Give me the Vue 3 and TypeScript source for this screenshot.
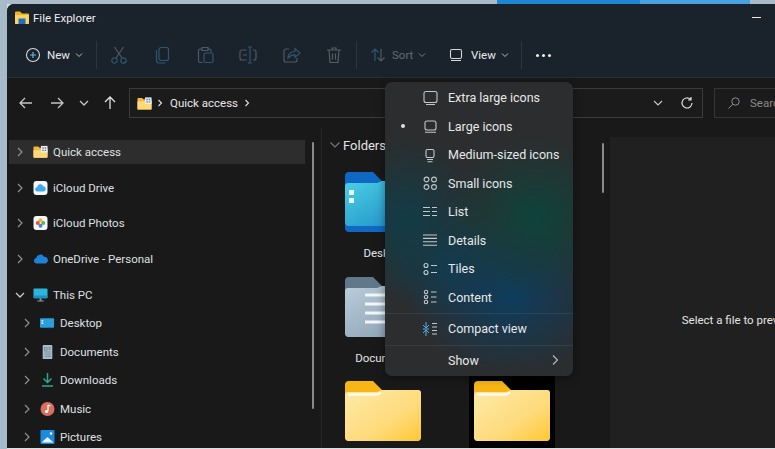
<script setup lang="ts">
type Part = { d: string; c?: string }
interface MenuItem { label: string; parts: Part[]; dot?: boolean }

const lines = (ys: number[], x1: number, x2: number) => ys.map((y) => `M${x1} ${y}H${x2}`).join('')
const circle = (x: number, y: number, r: number) => `M${x - r} ${y}a${r} ${r} 0 1 0 ${2 * r} 0a${r} ${r} 0 1 0 ${-2 * r} 0`

const viewItems: MenuItem[] = [
  { label: 'Extra large icons', parts: [{ d: 'M6 3.5h9a2 2 0 0 1 2 2v7a2 2 0 0 1-2 2H6a2 2 0 0 1-2-2v-7a2 2 0 0 1 2-2zM6 16.5h9' }] },
  { label: 'Large icons', dot: true, parts: [{ d: 'M7 5h7a2 2 0 0 1 2 2v5a2 2 0 0 1-2 2H7a2 2 0 0 1-2-2V7a2 2 0 0 1 2-2zM5 16.2h11' }] },
  { label: 'Medium-sized icons', parts: [{ d: 'M7.500 4.500h5a1.500 1.500 0 0 1 1.500 1.500v5a1.500 1.500 0 0 1-1.500 1.500h-5A1.500 1.500 0 0 1 6 11V6a1.500 1.500 0 0 1 1.500-1.500zM7 14.500h6M7.500 16.700h5' }] },
  { label: 'Small icons', parts: [{ d: circle(6.5, 6.5, 2.4) + circle(14, 6.5, 2.4) + circle(6.5, 14, 2.4) + circle(14, 14, 2.4) }] },
  { label: 'List', parts: [{ d: lines([5.5, 9.5, 13.5], 3, 10) + lines([5.5, 9.5, 13.5], 12, 17) }] },
  { label: 'Details', parts: [{ d: lines([5, 8.4, 11.8, 15.2], 3, 17) }] },
  { label: 'Tiles', parts: [{ d: circle(6, 6.5, 2) + circle(6, 13.5, 2) + lines([6.5, 13.5], 11, 17) }] },
  { label: 'Content', parts: [{ d: circle(6, 5, 1.7) + circle(6, 10, 1.7) + circle(6, 15, 1.7) + lines([5, 10, 15], 11, 16.5) }] }
]

const compactParts: Part[] = [
  { d: 'M6 3v6M3 6l3 3 3-3M6 17v-6M3 14l3-3 3 3M3 10h6', c: '#4fb3e8' },
  { d: lines([4.5, 8, 11.5, 15], 12, 17) }
]

const blue = '#2e566f'
const dim = '#4c5a64'
const tools: { name: string; parts: Part[] }[] = [
  { name: 'Cut', parts: [{ d: 'M5.5 2l7.5 11M14.5 2L7 13', c: dim }, { d: circle(5.5, 15.5, 2.7) + circle(14.5, 15.5, 2.7), c: blue }] },
  { name: 'Copy', parts: [{ d: 'M9 2.5h5.5a2 2 0 0 1 2 2v9a2 2 0 0 1-2 2H9a2 2 0 0 1-2-2v-9a2 2 0 0 1 2-2zM4.5 5v10a3 3 0 0 0 3 3h6', c: blue }] },
  { name: 'Paste', parts: [{ d: 'M7 4H5a1.5 1.5 0 0 0-1.5 1.5V16A1.5 1.5 0 0 0 5 17.5h2.5M13 4h1.500A1.500 1.500 0 0 1 16 5.500V7M7 2.500h6V5.500H7z', c: dim }, { d: 'M10.500 8h6a1.500 1.500 0 0 1 1.500 1.500V16a1.500 1.500 0 0 1-1.500 1.500h-6A1.500 1.500 0 0 1 9 16V9.500A1.500 1.500 0 0 1 10.500 8z', c: blue }] },
  { name: 'Rename', parts: [{ d: 'M8.500 5H4a2 2 0 0 0-2 2v6a2 2 0 0 0 2 2h4.500M15 5h1a2 2 0 0 1 2 2v6a2 2 0 0 1-2 2h-1M5 10h4', c: dim }, { d: 'M12 2v16M10 2h4M10 18h4', c: blue }] },
  { name: 'Share', parts: [{ d: 'M8 4H5a2 2 0 0 0-2 2v9a2 2 0 0 0 2 2h9a2 2 0 0 0 2-2v-2', c: dim }, { d: 'M7 13c0-4 3-6.500 7-6.500V3.500L19 8l-5 4.500V9.800c-3 0-5 1-7 3.200z', c: blue }] },
  { name: 'Delete', parts: [{ d: 'M3 5h14M8 5V3h4v2M5 5l1 12.500h8L15 5M8.500 8.500v6M11.500 8.500v6', c: '#555d63' }] }
]

const roots = [
  { label: 'Quick access', icon: 'quick', active: true },
  { label: 'iCloud Drive', icon: 'drive' },
  { label: 'iCloud Photos', icon: 'photos' },
  { label: 'OneDrive - Personal', icon: 'onedrive' }
]
const children = [
  { label: 'Desktop', icon: 'desktop' },
  { label: 'Documents', icon: 'documents' },
  { label: 'Downloads', icon: 'downloads' },
  { label: 'Music', icon: 'music' },
  { label: 'Pictures', icon: 'pictures' }
]
const folders = [
  { label: 'Desktop', kind: 'blue' },
  { label: '', kind: 'yellow' },
  { label: 'Documents', kind: 'gray' },
  { label: '', kind: 'yellow' },
  { label: '', kind: 'yellow' },
  { label: '', kind: 'yellow', black: true }
]
</script>

<template>
  <div class="page">
    <div class="window">
      <header class="titlebar">
        <svg class="ico16" viewBox="0 0 16 14"><path d="M1 1.500A1 1 0 0 1 2 .5h4l2 2h6a1 1 0 0 1 1 1V12a1 1 0 0 1-1 1H2a1 1 0 0 1-1-1z" fill="#f0b429"/><path d="M1 4h14v8a1 1 0 0 1-1 1H2a1 1 0 0 1-1-1z" fill="#fcd462"/><rect x="4.500" y="7.500" width="7" height="5.500" fill="#1f6fc2"/></svg>
        <span class="title">File Explorer</span>
        <span class="minimize"></span>
      </header>

      <div class="toolbar">
        <div class="new">
          <svg class="ico16" viewBox="0 0 16 16"><circle cx="8" cy="8" r="6.500" fill="none" stroke="#d5d8da" stroke-width="1.100"/><path d="M8 5v6M5 8h6" stroke="#62b6ea" stroke-width="1.200"/></svg>
          <span>New</span>
          <svg class="chev" viewBox="0 0 8 8"><path d="M1 2.500l3 3 3-3" fill="none" stroke="#b9bcbe"/></svg>
        </div>
        <i class="tsep"></i>
        <div class="tools">
          <span v-for="t in tools" :key="t.name" class="tool" :title="t.name">
            <svg class="ico20" viewBox="0 0 20 20"><path v-for="(p, i) in t.parts" :key="i" :d="p.d" :stroke="p.c" fill="none" stroke-width="1.200"/></svg>
          </span>
        </div>
        <i class="tsep sep2"></i>
        <div class="sort">
          <svg class="ico16" viewBox="0 0 16 16"><path d="M5 14V2M1.500 5.500L5 2l3.500 3.500" fill="none" stroke="#2e566f" stroke-width="1.200"/><path d="M11 2v12M7.500 10.500L11 14l3.500-3.500" fill="none" stroke="#4c5a64" stroke-width="1.200"/></svg>
          <span>Sort</span>
          <svg class="chev" viewBox="0 0 8 8"><path d="M1 2.500l3 3 3-3" fill="none" stroke="#75808a"/></svg>
        </div>
        <div class="view">
          <svg class="ico16" viewBox="0 0 16 16"><path d="M4 2.500h8a1.500 1.500 0 0 1 1.500 1.500v6a1.500 1.500 0 0 1-1.500 1.500H4A1.500 1.500 0 0 1 2.500 10V4A1.500 1.500 0 0 1 4 2.500zM3 13.500h10" fill="none" stroke="#d5d8da" stroke-width="1.100"/></svg>
          <span>View</span>
          <svg class="chev" viewBox="0 0 8 8"><path d="M1 2.500l3 3 3-3" fill="none" stroke="#b9bcbe"/></svg>
        </div>
        <i class="tsep sep3"></i>
        <div class="dots"><i></i><i></i><i></i></div>
      </div>

      <div class="nav">
        <svg class="navi back" viewBox="0 0 16 16"><path d="M14 8H2M7 3L2 8l5 5" fill="none" stroke="#c4c4c4" stroke-width="1.300"/></svg>
        <svg class="navi fwd" viewBox="0 0 16 16"><path d="M2 8h12M9 3l5 5-5 5" fill="none" stroke="#c4c4c4" stroke-width="1.300"/></svg>
        <svg class="navi down" viewBox="0 0 16 16"><path d="M4 6l4 4 4-4" fill="none" stroke="#c4c4c4" stroke-width="1.300"/></svg>
        <svg class="navi up" viewBox="0 0 16 16"><path d="M8 14V2M3 7l5-5 5 5" fill="none" stroke="#e0e0e0" stroke-width="1.300"/></svg>
        <div class="address">
          <svg class="addr-folder" viewBox="0 0 16 13"><path d="M.5 1.500a1 1 0 0 1 1-1h4l1.500 1.500h7.500a1 1 0 0 1 1 1V12a1 1 0 0 1-1 1h-13a1 1 0 0 1-1-1z" fill="#f5b83a"/><path d="M.5 4h15v8a1 1 0 0 1-1 1h-13a1 1 0 0 1-1-1z" fill="#fdd97a"/><rect x="8.500" y="0" width="7" height="7" fill="#e8eef2"/><path d="M10 1.500h1.500V3H10zM12.500 1.500H14V3h-1.500zM10 4h1.500v1.500H10zM12.500 4H14v1.500h-1.500z" fill="#5a7ea0"/></svg>
          <svg class="crumb first" viewBox="0 0 8 8"><path d="M2.500 1l3 3-3 3" fill="none" stroke="#e0e0e0" stroke-width="1.100"/></svg>
          <span class="crumb-text">Quick access</span>
          <svg class="crumb" viewBox="0 0 8 8"><path d="M2.500 1l3 3-3 3" fill="none" stroke="#e0e0e0" stroke-width="1.100"/></svg>
          <span class="grow"></span>
          <svg class="addr-chev" viewBox="0 0 12 12"><path d="M2 4l4 4 4-4" fill="none" stroke="#c8c8c8" stroke-width="1.100"/></svg>
          <svg class="addr-refresh" viewBox="0 0 14 14"><path d="M12 7a5 5 0 1 1-1.600-3.700M11 1v3H8" fill="none" stroke="#dcdcdc" stroke-width="1.200"/></svg>
        </div>
        <div class="search">
          <svg class="search-ico" viewBox="0 0 14 14"><circle cx="8.500" cy="5.500" r="3.700" fill="none" stroke="#8d8d8d"/><path d="M5.700 8.300L1.500 12.500" stroke="#8d8d8d"/></svg>
          <span>Search</span>
        </div>
      </div>

      <div class="body">
        <aside class="sidebar">
          <div class="tree">
            <div v-for="r in roots" :key="r.label" class="row root" :class="{ active: r.active }">
              <svg class="tw" viewBox="0 0 8 10"><path d="M2 1l4 4-4 4" fill="none" stroke="#8f8f8f" stroke-width="1.200"/></svg>
              <svg v-if="r.icon === 'quick'" class="si" viewBox="0 0 16 14"><path d="M.5 2a1 1 0 0 1 1-1h4L7 2.500h7.500a1 1 0 0 1 1 1V12a1 1 0 0 1-1 1h-13a1 1 0 0 1-1-1z" fill="#f5b83a"/><path d="M.5 5h15v7a1 1 0 0 1-1 1h-13a1 1 0 0 1-1-1z" fill="#fdd97a"/><rect x="8.500" y=".5" width="7" height="7" fill="#e8eef2"/><path d="M10 2h1.500v1.500H10zM12.500 2H14v1.500h-1.500zM10 4.500h1.500V6H10zM12.500 4.500H14V6h-1.500z" fill="#5a7ea0"/></svg>
              <svg v-else-if="r.icon === 'drive'" class="si" viewBox="0 0 14 14"><rect width="14" height="14" rx="3" fill="#f4f6f8"/><path d="M4 10.500a2.200 2.200 0 0 1-.3-4.400A3.200 3.200 0 0 1 9.800 5.200 2.700 2.700 0 0 1 10.300 10.500z" fill="#3ea8ea"/></svg>
              <svg v-else-if="r.icon === 'photos'" class="si" viewBox="0 0 14 14"><rect width="14" height="14" rx="3" fill="#f4f6f8"/><circle cx="7" cy="4.300" r="2" fill="#f5b62c"/><circle cx="9.700" cy="7" r="2" fill="#56b45a"/><circle cx="7" cy="9.700" r="2" fill="#3f86dc"/><circle cx="4.300" cy="7" r="2" fill="#e0504a"/></svg>
              <svg v-else class="si" viewBox="0 1.500 15 11"><path d="M3.500 11.500a2.800 2.800 0 0 1-.4-5.500A4.300 4.300 0 0 1 11 4.700 3.500 3.500 0 0 1 12.500 11.500z" fill="#1e83d8"/></svg>
              <span>{{ r.label }}</span>
            </div>
            <div class="row thispc">
              <svg class="tw tw-open" viewBox="0 0 10 8"><path d="M1 2l4 4 4-4" fill="none" stroke="#c8c8c8" stroke-width="1.300"/></svg>
              <svg class="si" viewBox="0 0 16 15"><rect x=".5" y=".5" width="15" height="10.500" rx="1" fill="#2cb4dc"/><path d="M.5 8h15v2a1 1 0 0 1-1 1h-13a1 1 0 0 1-1-1z" fill="#1b8fc4"/><path d="M7 11h2v2.500H7zM4.500 13.500h7v1h-7z" fill="#7f97a6"/></svg>
              <span>This PC</span>
            </div>
            <div v-for="c in children" :key="c.label" class="row child">
              <svg class="tw" viewBox="0 0 8 10"><path d="M2 1l4 4-4 4" fill="none" stroke="#8f8f8f" stroke-width="1.200"/></svg>
              <svg v-if="c.icon === 'desktop'" class="si" viewBox="0 0 16 12"><rect y="1" width="15" height="10" rx="1" fill="#2a9fdc"/><rect x="1.500" y="3" width="2" height="1.500" fill="#e8f6fc"/><rect x="1.500" y="5.500" width="2" height="1.500" fill="#e8f6fc"/><rect x="9" y="10.500" width="3" height="1" fill="#1a6a9c"/></svg>
              <svg v-else-if="c.icon === 'documents'" class="si" viewBox="0 0 14 16"><rect x="1.500" y="0" width="11" height="16" rx="1" fill="#a9bccb"/><path d="M3.500 3h3v3h-3zM8 3h3M8 5h3M3.500 8h7.500M3.500 10.500h7.500M3.500 13h7.500" stroke="#6f8696" fill="none"/></svg>
              <svg v-else-if="c.icon === 'downloads'" class="si" viewBox="0 0 14 14"><path d="M7 0v9M3 5.500l4 4 4-4" fill="none" stroke="#2aa889" stroke-width="1.500"/><path d="M1.500 13h11" stroke="#2aa889" stroke-width="1.500"/></svg>
              <svg v-else-if="c.icon === 'music'" class="si" viewBox="0 0 14 14"><circle cx="7" cy="7" r="7" fill="#d9705c"/><path d="M7.500 3v6" stroke="#fff" stroke-width="1.200"/><path d="M7.500 3l2.500 1" stroke="#fff" stroke-width="1.200"/><circle cx="6" cy="9.500" r="1.600" fill="#fff"/></svg>
              <svg v-else class="si" viewBox="0 0 14 14"><rect width="14" height="14" rx="1" fill="#1b8be0"/><path d="M1 12.500L7 7l6 5.500z" fill="#eaf6fd"/><circle cx="10.500" cy="3.500" r="1.200" fill="#fff"/></svg>
              <span>{{ c.label }}</span>
            </div>
          </div>
          <i class="sb sb-left"></i>
        </aside>

        <section class="content">
          <div class="folders">
            <div class="folders-head">
              <svg class="fh" viewBox="0 0 10 8"><path d="M.5 1.500L5 6l4.500-4.500" fill="none" stroke="#777" stroke-width="1.100"/></svg>
              <span>Folders</span>
            </div>
            <div class="grid">
              <div v-for="(f, i) in folders" :key="i" class="cell" :class="{ black: f.black }">
                <svg class="big" viewBox="0 0 76 60">
                  <defs>
                    <linearGradient id="gy" x1="0" y1="0" x2="1" y2="1"><stop offset="0" stop-color="#fdeaa8"/><stop offset=".6" stop-color="#fedb7c"/><stop offset="1" stop-color="#ffc733"/></linearGradient>
                    <linearGradient id="gb" x1="0" y1="0" x2="1" y2="1"><stop offset="0" stop-color="#4bd0e4"/><stop offset="1" stop-color="#1a86c4"/></linearGradient>
                    <linearGradient id="gg" x1="0" y1="0" x2="1" y2="1"><stop offset="0" stop-color="#bccddb"/><stop offset="1" stop-color="#8198ac"/></linearGradient>
                  </defs>
                  <template v-if="f.kind === 'yellow'">
                    <path d="M0 4a4 4 0 0 1 4-4h24l9 9h35a4 4 0 0 1 4 4v43a4 4 0 0 1-4 4H4a4 4 0 0 1-4-4z" fill="#f7b616"/>
                    <path d="M0 14a3 3 0 0 1 3-3L32 11l5-2h36a3 3 0 0 1 3 3v44a4 4 0 0 1-4 4H4a4 4 0 0 1-4-4z" fill="url(#gy)"/>
                    <path d="M3 13.500h29l4-2" stroke="#fff" stroke-width="2" fill="none"/>
                  </template>
                  <template v-else-if="f.kind === 'blue'">
                    <path d="M0 4a4 4 0 0 1 4-4h24l9 9h35a4 4 0 0 1 4 4v43a4 4 0 0 1-4 4H4a4 4 0 0 1-4-4z" fill="#0f69c4"/>
                    <path d="M0 14a3 3 0 0 1 3-3L32 11l5-2h36a3 3 0 0 1 3 3v38a4 4 0 0 1-4 4H4a4 4 0 0 1-4-4z" fill="url(#gb)"/>
                    <rect x="4" y="18" width="5" height="5" fill="#e7f8fc"/><rect x="4" y="26" width="5" height="5" fill="#e7f8fc"/>
                  </template>
                  <template v-else>
                    <path d="M0 4a4 4 0 0 1 4-4h24l9 9h35a4 4 0 0 1 4 4v43a4 4 0 0 1-4 4H4a4 4 0 0 1-4-4z" fill="#61788a"/>
                    <path d="M0 14a3 3 0 0 1 3-3L32 11l5-2h36a3 3 0 0 1 3 3v44a4 4 0 0 1-4 4H4a4 4 0 0 1-4-4z" fill="url(#gg)"/>
                    <path d="M20 27h36M20 36h36M20 45h36" stroke="#f2f6f8" stroke-width="3.200"/><path d="M20 18h36" stroke="#f2f6f8" stroke-width="3.200"/>
                  </template>
                </svg>
                <span v-if="f.label" class="cell-label">{{ f.label }}</span>
              </div>
            </div>
          </div>
          <i class="sb sb-right"></i>
        </section>

        <section class="preview"><span>Select a file to preview.</span></section>
      </div>
    </div>

    <div class="menu">
      <div v-for="m in viewItems" :key="m.label" class="mi">
        <i class="dot" :class="{ on: m.dot }"></i>
        <svg class="ico20" viewBox="0 0 20 20"><path v-for="(p, i) in m.parts" :key="i" :d="p.d" :stroke="p.c || '#c4c7ca'" fill="none" stroke-width="1.100"/></svg>
        <span>{{ m.label }}</span>
      </div>
      <div class="msep"></div>
      <div class="mi mi2">
        <i class="dot"></i>
        <svg class="ico20" viewBox="0 0 20 20"><path v-for="(p, i) in compactParts" :key="i" :d="p.d" :stroke="p.c || '#c4c7ca'" fill="none" stroke-width="1"/></svg>
        <span>Compact view</span>
      </div>
      <div class="msep"></div>
      <div class="mi mi2">
        <i class="dot"></i>
        <span class="ico20"></span>
        <span class="grow">Show</span>
        <svg class="mchev" viewBox="0 0 8 12"><path d="M2 1.500L6.500 6 2 10.500" fill="none" stroke="#b8bcc0" stroke-width="1.100"/></svg>
      </div>
    </div>
  </div>
</template>

<style>
html, body { margin: 0; background: #d9dee2; }
</style>

<style scoped>
.page {
  position: relative;
  width: 775px;
  height: 449px;
  box-sizing: border-box;
  padding: 4px 0 1.5px 7px;
  overflow: hidden;
  font-family: Roboto, "Noto Sans", sans-serif;
  font-size: 11.5px;
  color: #e4e6e8;
  background:
    linear-gradient(90deg, #a9bbc9 0 497px, #1f86d4 497px 640px, #49a3e0 640px 750px, #a9bbc9 750px) top / 100% 4px no-repeat,
    linear-gradient(#a7bac9, #a7bac9) left / 7px 100% no-repeat,
    #d9dee2;
}
.window {
  width: 768px;
  height: 100%;
  display: flex;
  flex-direction: column;
  border-radius: 7px 0 0 0;
  overflow: hidden;
  background: #191919;
}
.grow { flex: 1; }
svg { display: block; flex: none; }

.titlebar {
  height: 32px;
  flex: none;
  display: flex;
  align-items: center;
  box-sizing: border-box;
  padding: 0 13px 5px 7px;
  background: #1a232c;
}
.title { margin-left: 3px; font-size: 11.5px; color: #eceeef; flex: 1; }
.ico16 { width: 16px; height: 16px; }
.minimize { width: 9px; height: 1px; background: #e8e8e8; margin-right: 1px; }

.toolbar {
  height: 42px;
  flex: none;
  display: flex;
  align-items: center;
  box-sizing: border-box;
  padding: 0 0 3px 18px;
  background: #1a232c;
  border-bottom: 1px solid #2a2e31;
}
.new { display: flex; align-items: center; width: 71px; }
.new span { margin-left: 6px; color: #e8eaec; }
.chev { width: 8px; height: 8px; margin-left: 5px; }
.tsep { width: 1px; height: 28px; background: #2a3640; flex: none; }
.tools { display: flex; }
.tool { width: 43px; display: flex; justify-content: center; }
.ico20 { width: 20px; height: 20px; flex: none; display: block; }
.sep2 { margin-left: 1px; }
.sort { display: flex; align-items: center; margin-left: 13px; width: 78px; color: #5f6c76; }
.sort span { margin-left: 6px; }
.view { display: flex; align-items: center; width: 72px; }
.view span { margin-left: 7px; color: #e8eaec; }
.sep3 { margin-left: 1px; }
.dots { display: flex; gap: 3px; margin-left: 14px; }
.dots i { width: 3px; height: 3px; border-radius: 50%; background: #f0f0f0; }

.nav {
  height: 50px;
  flex: none;
  display: flex;
  align-items: center;
  padding-left: 11px;
  background: #191919;
}
.navi { width: 16px; height: 16px; }
.fwd { margin-left: 15px; }
.down { margin-left: 11px; }
.up { margin-left: 10px; }
.address {
  width: 574px;
  height: 30px;
  margin-left: 11px;
  box-sizing: border-box;
  border: 1px solid #3c3c3c;
  background: #1b1b1b;
  display: flex;
  align-items: center;
  padding-left: 7px;
  flex: none;
}
.addr-folder { width: 15px; height: 13px; }
.crumb { width: 8px; height: 8px; margin-left: 5px; }
.crumb.first { margin-left: 4px; }
.crumb-text { margin-left: 6px; color: #e8e8e8; }
.addr-chev { width: 12px; height: 12px; margin-right: 16px; }
.addr-refresh { width: 14px; height: 14px; margin-right: 8px; }
.search {
  width: 120px;
  height: 30px;
  margin-left: 11px;
  flex: none;
  box-sizing: border-box;
  border: 1px solid #353535;
  background: #1b1b1b;
  display: flex;
  align-items: center;
  padding-left: 12px;
  color: #8a8a8a;
}
.search span { margin-left: 9px; }
.search-ico { width: 14px; height: 14px; }

.body { flex: 1; min-height: 0; display: flex; }
.sidebar {
  width: 315px;
  flex: none;
  display: flex;
  box-sizing: border-box;
  border-right: 1px solid #252525;
  padding: 12px 0 0 2px;
}
.tree { width: 296px; flex: none; }
.row { display: flex; align-items: center; color: #dfe0e1; height: 24px; }
.row > span { margin-left: 5px; white-space: nowrap; }
.root { padding-left: 7px; margin-bottom: 11.700px; }
.active { background: #2d2d2d; }
.thispc { padding-left: 7px; margin-bottom: 2px; }
.child { height: 28.500px; padding-left: 14px; }
.tw { width: 8px; height: 10px; }
.tw-open { width: 10px; height: 8px; margin-left: -1px; margin-right: -1px; }
.si { width: 15px; height: 14px; margin-left: 9px; }
.sb { display: block; width: 2px; background: #8a8a8a; flex: none; border-radius: 1px; }
.sb-left { height: 267px; margin: 2px 0 0 7px; }

.content {
  width: 288px;
  flex: none;
  display: flex;
  position: relative;
  overflow: hidden;
}
.folders { width: 280px; flex: none; padding-left: 8px; box-sizing: border-box; }
.folders-head { display: flex; align-items: center; height: 20px; margin-top: 7px; font-size: 13px; color: #e4e4e4; }
.fh { width: 10px; height: 8px; }
.folders-head span { margin-left: 3px; }
.grid { display: grid; grid-template-columns: 129px 129px; grid-auto-rows: 104.500px; margin-top: 17px; }
.cell { display: flex; flex-direction: column; align-items: center; width: 86px; margin-left: 10px; box-sizing: border-box; }
.cell.black { background: #000; padding-top: 5px; margin-top: -5px; height: 80px; }
.big { width: 76px; height: 60px; }
.cell-label { margin-top: 14px; padding-left: 3px; font-size: 11.500px; white-space: nowrap; color: #e4e4e4; }
.sb-right { height: 50px; margin: 15px 0 0 0; position: relative; z-index: 1; }

.preview {
  width: 260px;
  flex: none;
  margin-top: 9px;
  box-sizing: border-box;
  background: #202020;
  display: flex;
  align-items: center;
  justify-content: center;
  padding-top: 56px;
  color: #e4e4e4;
}
.preview span { white-space: nowrap; }

.menu {
  position: absolute;
  left: 385px;
  top: 82px;
  width: 188px;
  height: 294px;
  box-sizing: border-box;
  padding-top: 1.500px;
  border-radius: 7px;
  color: #e6e8ea;
  font-size: 12.500px;
  background:
    radial-gradient(90px 80px at 150px 135px, #0f433c 0, rgba(15, 67, 60, 0) 100%),
    radial-gradient(80px 80px at 20px 135px, #123c46 0, rgba(18, 60, 70, 0) 100%),
    radial-gradient(100px 80px at 125px 215px, #0e3d5e 0, rgba(14, 61, 94, 0) 100%),
    radial-gradient(70px 60px at 60px 180px, #143a4a 0, rgba(20, 58, 74, 0) 100%),
    #2c2d2e;
  box-shadow: 0 2px 8px rgba(0, 0, 0, 0.400);
}
.mi { height: 28.500px; display: flex; align-items: center; }
.mi2 { height: 29px; }
.mi > span:last-of-type { white-space: nowrap; }
.mi > .ico20 + span { margin-left: 8px; }
.dot { width: 35px; flex: none; display: flex; justify-content: center; position: relative; }
.dot.on::before { content: ""; width: 4px; height: 4px; border-radius: 50%; background: #e0e0e0; margin-left: 1px; }
.msep { height: 1px; background: rgba(255, 255, 255, 0.070); margin: 1.500px 0 0; }
.mchev { width: 8px; height: 12px; margin-right: 14px; }
</style>
